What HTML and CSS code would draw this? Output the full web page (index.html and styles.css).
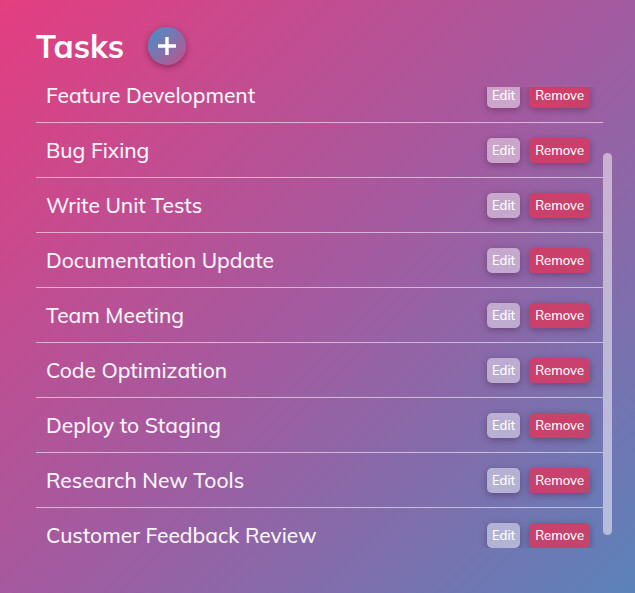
FILE: index.html
```html
<!DOCTYPE html>
<html lang="en">
<head>
<meta charset="utf-8">
<title>Tasks</title>
<link rel="stylesheet" href="styles.css">
</head>
<body>
<main class="app">
  <header class="head">
    <h1 class="title">Tasks</h1>
    <button class="add" aria-label="Add task">
      <svg width="20" height="20" viewBox="0 0 20 20"><path d="M10 1v18M1 10h18" stroke="#fff" stroke-width="3.4" stroke-linecap="butt"/></svg>
    </button>
  </header>
  <div class="scroller">
    <ul class="list" id="list">
      <li class="row"><span class="name">Feature Development</span><span class="acts"><button class="btn edit">Edit</button><button class="btn remove">Remove</button></span></li>
      <li class="row"><span class="name">Bug Fixing</span><span class="acts"><button class="btn edit">Edit</button><button class="btn remove">Remove</button></span></li>
      <li class="row"><span class="name">Write Unit Tests</span><span class="acts"><button class="btn edit">Edit</button><button class="btn remove">Remove</button></span></li>
      <li class="row"><span class="name">Documentation Update</span><span class="acts"><button class="btn edit">Edit</button><button class="btn remove">Remove</button></span></li>
      <li class="row"><span class="name">Team Meeting</span><span class="acts"><button class="btn edit">Edit</button><button class="btn remove">Remove</button></span></li>
      <li class="row"><span class="name">Code Optimization</span><span class="acts"><button class="btn edit">Edit</button><button class="btn remove">Remove</button></span></li>
      <li class="row"><span class="name">Deploy to Staging</span><span class="acts"><button class="btn edit">Edit</button><button class="btn remove">Remove</button></span></li>
      <li class="row"><span class="name">Research New Tools</span><span class="acts"><button class="btn edit">Edit</button><button class="btn remove">Remove</button></span></li>
      <li class="row"><span class="name">Customer Feedback Review</span><span class="acts"><button class="btn edit">Edit</button><button class="btn remove">Remove</button></span></li>
    </ul>
    <div class="thumb"></div>
  </div>
</main>
<script src="app.js"></script>
</body>
</html>
```
FILE: styles.css
```css
html, body {
  margin: 0;
  height: 100%;
}
body {
  background: linear-gradient(135deg, #e43e80 0%, #a45a9f 50%, #5c82ba 100%);
  font-family: Mulish, "Open Sans", sans-serif;
  color: #fff;
  overflow: hidden;
}
.app {
  padding: 24px 22px 0 36px;
}
.head {
  display: flex;
  align-items: center;
  gap: 24px;
  height: 44px;
}
.title {
  margin: 0;
  font-size: 32.5px;
  font-weight: 700;
  line-height: 1;
}
.add {
  width: 38px;
  height: 38px;
  border-radius: 50%;
  border: none;
  padding: 0;
  display: flex;
  align-items: center;
  justify-content: center;
  background: linear-gradient(135deg, #3f94cc 0%, #c4508c 100%);
  box-shadow: 0 2px 6px rgba(60, 0, 40, 0.45);
}
.scroller {
  position: relative;
  margin-top: 19px;
}
.list {
  list-style: none;
  margin: 0 10px 0 0;
  padding: 0 0 60px;
  height: 461px;
  box-sizing: border-box;
  overflow: hidden;
}
.thumb {
  position: absolute;
  right: 1px;
  top: 66px;
  width: 9px;
  height: 382px;
  border-radius: 5px;
  background: rgba(255, 255, 255, 0.5);
}
.row {
  display: flex;
  align-items: center;
  justify-content: space-between;
  height: 54px;
  padding: 0 13px 0 10px;
  border-bottom: 1px solid rgba(255, 255, 255, 0.55);
}
.name {
  font-size: 21px;
  font-weight: 500;
  color: #fbf6fb;
}
.acts {
  display: flex;
  gap: 9px;
}
.btn {
  font-family: Mulish, "Open Sans", sans-serif;
  font-size: 13px;
  font-weight: 500;
  color: #fff;
  border: none;
  border-radius: 5px;
  height: 25px;
  padding: 0 5px;
  box-shadow: 0 2px 7px rgba(50, 0, 40, 0.35);
}
.edit {
  background: rgba(255, 255, 255, 0.45);
}
.remove {
  background: rgba(214, 58, 96, 0.85);
  padding: 0 6px;
}
```
FILE: app.js
```js
document.getElementById('list').scrollTop = 19;
```
